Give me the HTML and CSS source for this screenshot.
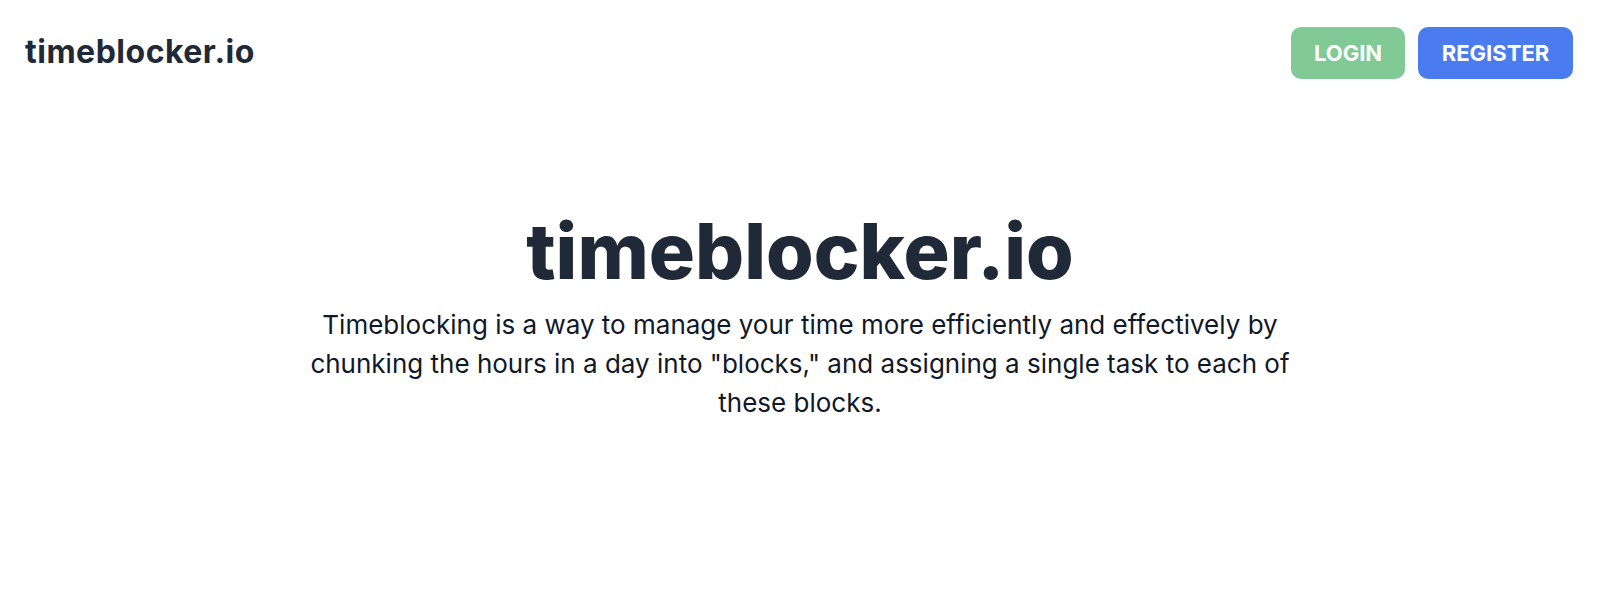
FILE: index.html
```html
<!DOCTYPE html>
<html lang="en">
<head>
<meta charset="utf-8">
<title>timeblocker.io</title>
<link rel="stylesheet" href="styles.css">
</head>
<body>
<header class="nav">
  <a class="brand" href="#">timeblocker.io</a>
  <div class="actions">
    <a class="btn btn-login" href="#">LOGIN</a>
    <a class="btn btn-register" href="#">REGISTER</a>
  </div>
</header>
<main class="hero">
  <h1 class="title">timeblocker.io</h1>
  <p class="lead">Timeblocking is a way to manage your time more efficiently and effectively by chunking the hours in a day into "blocks," and assigning a single task to each of these blocks.</p>
</main>
</body>
</html>
```
FILE: styles.css
```css
* { box-sizing: border-box; }
html, body { margin: 0; padding: 0; background: #fff; }
body {
  font-family: Inter, "Noto Sans", sans-serif;
  color: #1f2937;
}
.nav {
  display: flex;
  justify-content: space-between;
  align-items: center;
  padding: 27px 27px 0 25px;
}
.brand {
  font-size: 32px;
  font-weight: 700;
  line-height: 38px;
  color: #1f2937;
  text-decoration: none;
  letter-spacing: 0.5px;
  margin-top: -2px;
}
.actions {
  display: flex;
  gap: 13px;
}
.btn {
  display: flex;
  align-items: center;
  justify-content: center;
  height: 52px;
  border-radius: 10px;
  color: #fff;
  font-size: 22px;
  font-weight: 700;
  text-decoration: none;
}
.btn-login { width: 114px; background: #81c995; }
.btn-register { width: 155px; background: #4a7cf0; }
.hero {
  display: flex;
  flex-direction: column;
  align-items: center;
  text-align: center;
  padding-top: 130px;
}
.title {
  margin: 0;
  font-size: 77px;
  font-weight: 800;
  line-height: 85px;
  color: #1f2937;
}
.lead {
  margin: 11px 0 0;
  max-width: 1020px;
  font-size: 26px;
  line-height: 39px;
  color: #111827;
}
```
